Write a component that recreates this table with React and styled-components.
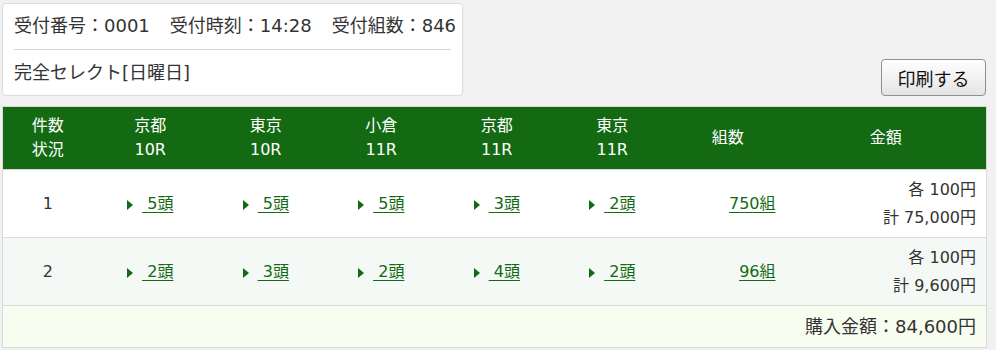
import React from "react";
import styled, { createGlobalStyle } from "styled-components";

const GlobalStyle = createGlobalStyle`
  html, body { margin: 0; padding: 0; background: #f1f1f1; }
  body {
    font-family: "DejaVu Sans", "Noto Sans CJK JP", sans-serif;
    color: #333;
  }
`;

const Page = styled.div`
  padding: 3px 10px 0 2px;
`;

const TopBar = styled.div`
  display: flex;
  justify-content: space-between;
  align-items: flex-end;
  margin-bottom: 10px;
`;

const InfoBox = styled.div`
  width: 437px;
  background: #fff;
  border: 1px solid #dcdcdc;
  border-radius: 4px;
  padding: 9px 11px 9px 11px;
  font-size: 18px;
`;

const InfoLine = styled.div`
  display: flex;
  gap: 20px;
  line-height: 26px;
  white-space: nowrap;
`;

const Divider = styled.hr`
  border: 0;
  border-top: 1px solid #d6d6d6;
  margin: 10px 0;
`;

const PrintButton = styled.button`
  width: 105px;
  height: 37px;
  font-family: inherit;
  font-size: 18px;
  color: #111;
  background: linear-gradient(#ffffff, #e4e4e4);
  border: 1px solid #8f8f8f;
  border-radius: 4px;
  padding: 0;
  cursor: pointer;
`;

const Table = styled.table`
  width: 984px;
  table-layout: fixed;
  border-collapse: collapse;
  border: 1px solid #dadada;
  font-size: 16px;
`;

const HeadCell = styled.th`
  background: #136a13;
  color: #fff;
  font-weight: normal;
  text-align: center;
  line-height: 24px;
  padding: 7px 0;
`;

const Row = styled.tr`
  background: ${(p) => p.$bg};
  border-top: 1px solid #dadada;
`;

const Cell = styled.td`
  text-align: ${(p) => p.$align || "center"};
  padding: 6px 10px;
  line-height: 27.5px;
  height: 55px;
  vertical-align: middle;
  white-space: nowrap;
`;

const TotalCell = styled.td`
  text-align: right;
  padding: 7px 10px;
  line-height: 27px;
  font-size: 18px;
`;

const Arrow = styled.span`
  display: inline-block;
  width: 0;
  height: 0;
  border-left: 6px solid #136a13;
  border-top: 5px solid transparent;
  border-bottom: 5px solid transparent;
  margin-right: 9px;
  vertical-align: -1px;
`;

const Link = styled.a`
  color: #136a13;
  text-decoration: underline;
  text-underline-offset: 3px;
`;

const races = [
  ["京都", "10R"],
  ["東京", "10R"],
  ["小倉", "11R"],
  ["京都", "11R"],
  ["東京", "11R"],
];

const rows = [
  { n: 1, picks: ["5頭", "5頭", "5頭", "3頭", "2頭"], sets: "750組", each: "各 100円", total: "計 75,000円", bg: "#ffffff" },
  { n: 2, picks: ["2頭", "3頭", "2頭", "4頭", "2頭"], sets: "96組", each: "各 100円", total: "計 9,600円", bg: "#f4f9f6" },
];

export default function App() {
  return (
    <>
      <GlobalStyle />
      <Page>
        <TopBar>
          <InfoBox>
            <InfoLine>
              <span>受付番号：0001</span>
              <span>受付時刻：14:28</span>
              <span>受付組数：846</span>
            </InfoLine>
            <Divider />
            <InfoLine>完全セレクト[日曜日]</InfoLine>
          </InfoBox>
          <PrintButton>印刷する</PrintButton>
        </TopBar>
        <Table>
          <colgroup>
            <col style={{ width: 90 }} />
            {races.map((_, i) => (
              <col key={i} style={{ width: 115.5 }} />
            ))}
            <col style={{ width: 115.5 }} />
            <col style={{ width: 201 }} />
          </colgroup>
          <thead>
            <tr>
              <HeadCell>件数<br />状況</HeadCell>
              {races.map(([place, r], i) => (
                <HeadCell key={i}>{place}<br />{r}</HeadCell>
              ))}
              <HeadCell>組数</HeadCell>
              <HeadCell>金額</HeadCell>
            </tr>
          </thead>
          <tbody>
            {rows.map((row) => (
              <Row key={row.n} $bg={row.bg}>
                <Cell>{row.n}</Cell>
                {row.picks.map((p, i) => (
                  <Cell key={i}>
                    <Arrow />
                    <Link href="#">{"\u00a0" + p}</Link>
                  </Cell>
                ))}
                <Cell $align="right">
                  <Link href="#">{row.sets}</Link>
                </Cell>
                <Cell $align="right">
                  {row.each}
                  <br />
                  {row.total}
                </Cell>
              </Row>
            ))}
            <Row $bg="#f7fdef">
              <TotalCell colSpan={8}>購入金額：84,600円</TotalCell>
            </Row>
          </tbody>
        </Table>
      </Page>
    </>
  );
}
